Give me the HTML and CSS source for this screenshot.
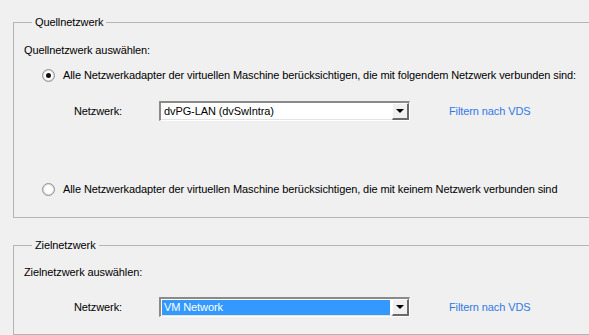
FILE: index.html
```html
<!DOCTYPE html>
<html lang="de">
<head>
  <meta charset="UTF-8" />
  <title>Netzwerkzuordnung</title>
  <link rel="stylesheet" href="styles.css">
</head>
<body>
  <fieldset class="group group-source">
    <legend>Quellnetzwerk</legend>
    <p class="caption">Quellnetzwerk auswählen:</p>

    <label class="radio-row first">
      <span class="radio checked"></span>
      <span>Alle Netzwerkadapter der virtuellen Maschine berücksichtigen, die mit folgendem Netzwerk verbunden sind:</span>
    </label>

    <div class="net-row">
      <span class="net-label">Netzwerk:</span>
      <div class="combo">
        <span class="combo-value">dvPG-LAN (dvSwIntra)</span>
        <span class="combo-btn"><span class="arrow"></span></span>
      </div>
      <a class="link" href="#">Filtern nach VDS</a>
    </div>

    <label class="radio-row second">
      <span class="radio"></span>
      <span>Alle Netzwerkadapter der virtuellen Maschine berücksichtigen, die mit keinem Netzwerk verbunden sind</span>
    </label>
  </fieldset>

  <fieldset class="group group-target">
    <legend>Zielnetzwerk</legend>
    <p class="caption">Zielnetzwerk auswählen:</p>

    <div class="net-row target">
      <span class="net-label">Netzwerk:</span>
      <div class="combo">
        <span class="combo-value selected">VM Network</span>
        <span class="combo-btn"><span class="arrow"></span></span>
      </div>
      <a class="link" href="#">Filtern nach VDS</a>
    </div>
  </fieldset>
</body>
</html>
```

FILE: styles.css
```css
* {
  box-sizing: border-box;
  margin: 0;
  padding: 0;
}
body {
  background: #f0f0f0;
  color: #000;
  font-family: "Liberation Sans", Arial, sans-serif;
  font-size: 11px;
  line-height: 14px;
  letter-spacing: -0.1px;
  width: 589px;
  height: 335px;
  overflow: hidden;
}
.group {
  border: 1px solid #b4b4b4;
  margin: 15px -2px 0 13px;
  padding: 0 0 0 10px;
}
.group legend {
  margin-left: 8px;
  padding: 0 3px;
  line-height: 14px;
}
.group-source {
  height: 203px;
}
.group-target {
  margin-top: 20px;
  height: 97px;
}
.caption {
  margin-top: 14px;
}
.group-target .caption {
  margin-top: 13px;
}
.radio-row {
  display: flex;
  align-items: center;
  gap: 8px;
  padding-left: 18px;
  white-space: nowrap;
}
.radio-row.first {
  margin-top: 11px;
}
.radio-row.second {
  margin-top: 61px;
}
.radio {
  width: 13px;
  height: 13px;
  border-radius: 50%;
  background: #fff;
  border: 1px solid #8e8e8e;
  box-shadow: inset 0 0 0 1px #dcdcdc;
  display: flex;
  align-items: center;
  justify-content: center;
}
.radio.checked::after {
  content: "";
  width: 5px;
  height: 5px;
  border-radius: 50%;
  background: #111;
}
.net-row {
  display: flex;
  align-items: center;
  padding-left: 50px;
  margin-top: 19px;
}
.net-row.target {
  margin-top: 18px;
}
.net-label {
  width: 85px;
}
.combo {
  display: flex;
  width: 251px;
  height: 20px;
  background: #fff;
  border-top: 2px solid #8a8a8a;
  border-left: 2px solid #8a8a8a;
  border-right: 1px solid #fff;
  border-bottom: 1px solid #fff;
  box-shadow: inset -1px -1px 0 #e3e3e3;
  padding: 1px;
}
.combo-value {
  flex: 1;
  line-height: 14px;
  padding-left: 2px;
  margin-right: 2px;
}
.combo-value.selected {
  background: #3399ff;
  color: #fff;
}
.combo-btn {
  width: 17px;
  background: #f0f0f0;
  border-top: 1px solid #fff;
  border-left: 1px solid #fff;
  border-right: 2px solid #6a6a6a;
  border-bottom: 2px solid #6a6a6a;
  display: flex;
  align-items: center;
  justify-content: center;
  margin: -1px -1px -1px 0;
}
.arrow {
  width: 0;
  height: 0;
  border-left: 4px solid transparent;
  border-right: 4px solid transparent;
  border-top: 4px solid #000;
}
.link {
  margin-left: 39px;
  color: #3079e6;
  text-decoration: none;
}
```
